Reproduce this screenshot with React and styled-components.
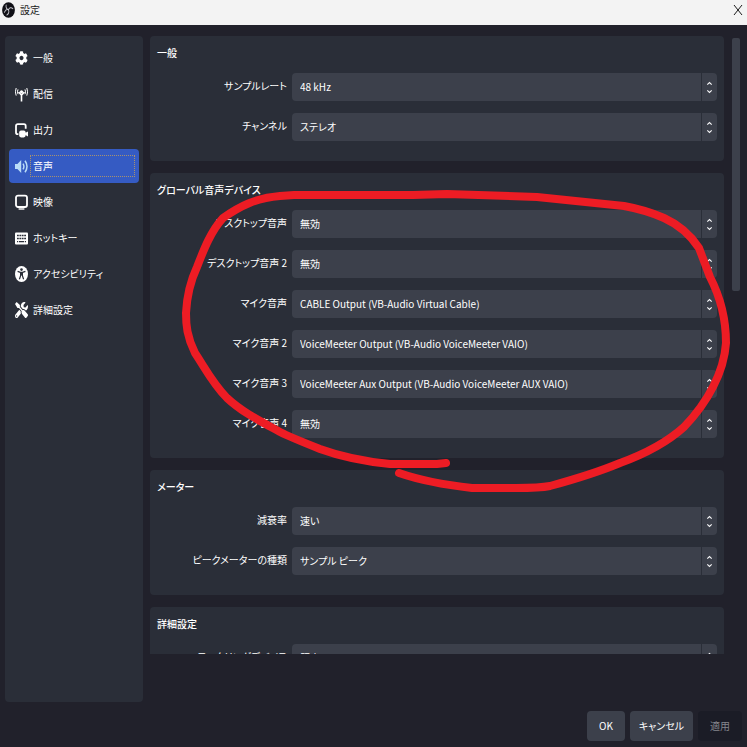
import React, { useState } from "react";
import styled, { createGlobalStyle } from "styled-components";
import { FaCog, FaTools } from "react-icons/fa";

const GlobalStyle = createGlobalStyle`
  * {
    box-sizing: border-box;
  }
  body {
    margin: 0;
    background: #21212b;
    color: #fff;
    font-family: "Noto Sans CJK JP", "Noto Sans", sans-serif;
    font-size: 10px;
    line-height: 16px;
    font-feature-settings: "palt";
  }
  button,
  select {
    font: inherit;
    font-feature-settings: inherit;
    color: inherit;
    border: 0;
    margin: 0;
  }
`;

const Window = styled.div`
  position: relative;
  display: flex;
  flex-direction: column;
  height: 100vh;
  overflow: hidden;
`;

const TitleBar = styled.header`
  display: flex;
  align-items: center;
  gap: 5px;
  flex: none;
  height: 25px;
  padding: 0 4px 6px 2px;
  background: #f3f3f3;
  color: #1b1b1b;
`;

const Title = styled.h1`
  flex: 1;
  margin: 0;
  font-size: 10px;
  font-weight: 400;
`;

const CloseButton = styled.button`
  display: flex;
  padding: 0;
  background: none;
`;

const Main = styled.div`
  display: flex;
  flex: 1;
  min-height: 0;
  gap: 7px;
  padding: 11px 7px 9px 5px;
`;

const Sidebar = styled.nav`
  display: flex;
  flex-direction: column;
  flex: none;
  gap: 2px;
  width: 138px;
  padding: 5px 4px;
  border-radius: 4px;
  background: #2a2e38;
`;

const NavButton = styled.button`
  display: flex;
  align-items: center;
  gap: 2px;
  height: 34px;
  padding: 0 4px 0 6px;
  border-radius: 4px;
  background: ${(props) => (props.$active ? "#355bc3" : "transparent")};
  text-align: left;

  svg {
    flex: none;
    color: ${(props) => (props.$active ? "#b9dcf7" : "#fff")};
  }
`;

const NavText = styled.span`
  flex: 1;
  padding: 2px;
  border: 1px dotted ${(props) => (props.$active ? "#a8926f" : "transparent")};
`;

const ScrollArea = styled.div`
  display: flex;
  flex: 1;
  gap: 8px;
  min-width: 0;
  margin-bottom: 48px;
`;

const Groups = styled.main`
  display: flex;
  flex-direction: column;
  flex: 1;
  gap: 12px;
  min-width: 0;
  overflow-y: auto;
  scrollbar-width: none;
`;

const ScrollTrack = styled.div`
  flex: none;
  width: 8px;
  padding-top: 2px;
`;

const ScrollThumb = styled.div`
  height: 41%;
  border-radius: 2px;
  background: #3c404b;
`;

const Group = styled.section`
  display: flex;
  flex-direction: column;
  flex: none;
  gap: 12px;
  padding: 9px 7px 20px;
  border-radius: 4px;
  background: #2a2e38;
`;

const GroupTitle = styled.h2`
  margin: 0;
  font-size: 10px;
  line-height: 16px;
  font-weight: 500;
`;

const Row = styled.div`
  display: grid;
  grid-template-columns: 130px 1fr;
  gap: 5px;
`;

const Label = styled.label`
  line-height: 26px;
  text-align: right;
  white-space: nowrap;
`;

const Combo = styled.div`
  display: flex;
  gap: 1px;
  height: 28px;
  border-radius: 4px;
  overflow: hidden;
`;

const Select = styled.select`
  flex: 1;
  min-width: 0;
  padding: 0 8px;
  border-radius: 0;
  background: #3c404b;
  appearance: none;
  outline: none;
`;

const Stepper = styled.span`
  display: flex;
  align-items: center;
  justify-content: center;
  width: 15px;
  padding-top: 1px;
  background: #3c404b;
`;

const Footer = styled.footer`
  display: flex;
  justify-content: flex-end;
  flex: none;
  gap: 5px;
  padding: 0 5px 6px;
`;

const DialogButton = styled.button`
  min-width: ${(props) => (props.$wide ? "63px" : "38px")};
  height: 30px;
  padding: 0 ${(props) => (props.$wide ? "8px" : "12px")};
  border-radius: 4px;
  background: #3c404b;

  &:disabled {
    background: #1b1c26;
    color: #85868d;
  }
`;

const Marker = styled.svg`
  position: absolute;
  inset: 0;
  width: 100%;
  pointer-events: none;
`;

const AntennaIcon = () => (
  <svg width="13" height="15" viewBox="0 0 13 15" fill="none" stroke="currentColor">
    <path d="M3.6 5L6.5 8L9.4 5M6.5 7.4V14.6" strokeWidth="1.6" />
    <circle cx="6.5" cy="4.8" r="1.6" fill="currentColor" stroke="none" />
    <path
      d="M3 2.4Q1.9 4.8 3 7.2M1.2 1Q-0.4 4.8 1.2 8.6M10 2.4Q11.1 4.8 10 7.2M11.8 1Q13.4 4.8 11.8 8.6"
      strokeWidth="1"
    />
  </svg>
);

const OutputIcon = () => (
  <svg width="13" height="15" viewBox="0 0 13 15" fill="none">
    <path
      d="M3.4 11.2H2.8Q1 11.2 1 9.4V2.9Q1 1.2 2.8 1.2H9Q10.7 1.2 10.7 2.9V5.8"
      stroke="currentColor"
      strokeWidth="1.8"
    />
    <rect x="4.2" y="7.4" width="6.4" height="7" rx="1.8" fill="currentColor" />
    <path d="M10 10L13 8.4V13.4L10 11.8Z" fill="currentColor" />
  </svg>
);

const SpeakerIcon = () => (
  <svg width="13" height="15" viewBox="0 0 13 15" fill="none">
    <path d="M0 5H2.4L6.2 1V14L2.4 10H0Z" fill="currentColor" />
    <path
      d="M8 4.6Q9.8 7.5 8 10.4M10 1.8Q14 7.5 10 13.2"
      stroke="currentColor"
      strokeWidth="1.5"
    />
  </svg>
);

const MonitorIcon = () => (
  <svg width="13" height="16" viewBox="0 0 13 16" fill="none">
    <rect x="1" y="1.6" width="11" height="11.4" rx="2" stroke="currentColor" strokeWidth="1.8" />
    <path d="M3.6 15H9.4" stroke="currentColor" strokeWidth="1.4" />
  </svg>
);

const KeyboardIcon = () => (
  <svg width="13" height="13" viewBox="0 0 13 13">
    <rect y="0.5" width="13" height="12" rx="1" fill="currentColor" />
    <path
      d="M2 3.6H11M2 6.4H11"
      stroke="#2a2e38"
      strokeWidth="1.5"
      strokeDasharray="1.8 0.6"
    />
    <path d="M2 9.6H3.2M4 9.6H9M9.8 9.6H11" stroke="#2a2e38" strokeWidth="1.4" />
  </svg>
);

const AccessIcon = () => (
  <svg width="13" height="16" viewBox="0 0 13 16">
    <ellipse cx="6.5" cy="8" rx="6.5" ry="8" fill="currentColor" />
    <circle cx="6.5" cy="3.6" r="1.3" fill="#2a2e38" />
    <path
      d="M2.6 5.4L5.4 6.4H7.6L10.4 5.4M5.6 6.4V9.6L4.4 13.2M7.4 6.4V9.6L8.6 13.2M6.5 6.4V9.6"
      fill="none"
      stroke="#2a2e38"
      strokeWidth="1.2"
    />
  </svg>
);

const Chevrons = () => (
  <svg width="7" height="13" viewBox="0 0 7 13" fill="none" stroke="#f4f4f6" strokeWidth="1.1">
    <path d="M1.3 3.7L3.5 1.5L5.7 3.7M1.3 9.3L3.5 11.5L5.7 9.3" />
  </svg>
);

const ObsLogo = () => (
  <svg width="13" height="16" viewBox="0 0 24 24" preserveAspectRatio="none">
    <circle cx="12" cy="12" r="11.8" fill="#101016" />
    <g fill="none" stroke="#c9c9d0" strokeWidth="1.6" strokeLinecap="round">
      <path d="M7.6 4.6C6.8 8.2 8.6 11 12 11.6" />
      <path d="M12 11.6C13.4 8.6 17 7.6 20 10" />
      <path d="M12 11.6C13.6 14.6 12.4 18 9 19.4" />
      <path d="M12 11.6C9.4 11 6 12.2 4.6 15.4" />
    </g>
  </svg>
);

const pages = [
  { name: "一般", icon: <FaCog style={{ width: 13, height: 14 }} preserveAspectRatio="none" /> },
  { name: "配信", icon: <AntennaIcon /> },
  { name: "出力", icon: <OutputIcon /> },
  { name: "音声", icon: <SpeakerIcon /> },
  { name: "映像", icon: <MonitorIcon /> },
  { name: "ホットキー", icon: <KeyboardIcon /> },
  { name: "アクセシビリティ", icon: <AccessIcon /> },
  { name: "詳細設定", icon: <FaTools style={{ width: 13, height: 16 }} preserveAspectRatio="none" /> },
];

const groups = [
  {
    title: "一般",
    rows: [
      ["サンプルレート", "48 kHz"],
      ["チャンネル", "ステレオ"],
    ],
  },
  {
    title: "グローバル音声デバイス",
    rows: [
      ["デスクトップ音声", "無効"],
      ["デスクトップ音声 2", "無効"],
      ["マイク音声", "CABLE Output (VB-Audio Virtual Cable)"],
      ["マイク音声 2", "VoiceMeeter Output (VB-Audio VoiceMeeter VAIO)"],
      ["マイク音声 3", "VoiceMeeter Aux Output (VB-Audio VoiceMeeter AUX VAIO)"],
      ["マイク音声 4", "無効"],
    ],
  },
  {
    title: "メーター",
    rows: [
      ["減衰率", "速い"],
      ["ピークメーターの種類", "サンプル ピーク"],
    ],
  },
  {
    title: "詳細設定",
    rows: [["モニタリングデバイス", "既定"]],
  },
];

function SettingRow({ id, label, value }) {
  return (
    <Row>
      <Label htmlFor={id}>{label}</Label>
      <Combo>
        <Select id={id} defaultValue={value}>
          <option>{value}</option>
        </Select>
        <Stepper>
          <Chevrons />
        </Stepper>
      </Combo>
    </Row>
  );
}

function App() {
  const [page, setPage] = useState("音声");
  return (
    <Window>
      <GlobalStyle />
      <TitleBar>
        <ObsLogo />
        <Title>設定</Title>
        <CloseButton aria-label="閉じる">
          <svg width="10" height="12" viewBox="0 0 10 12" stroke="#1b1b1b">
            <path d="M1 1L9 11M9 1L1 11" />
          </svg>
        </CloseButton>
      </TitleBar>
      <Main>
        <Sidebar>
          {pages.map(({ name, icon }) => (
            <NavButton key={name} $active={name === page} onClick={() => setPage(name)}>
              {icon}
              <NavText $active={name === page}>{name}</NavText>
            </NavButton>
          ))}
        </Sidebar>
        <ScrollArea>
          <Groups>
            {groups.map((group, g) => (
              <Group key={group.title}>
                <GroupTitle>{group.title}</GroupTitle>
                {group.rows.map(([label, value], r) => (
                  <SettingRow key={label} id={`s${g}-${r}`} label={label} value={value} />
                ))}
              </Group>
            ))}
          </Groups>
          <ScrollTrack>
            <ScrollThumb />
          </ScrollTrack>
        </ScrollArea>
      </Main>
      <Footer>
        <DialogButton>OK</DialogButton>
        <DialogButton $wide>キャンセル</DialogButton>
        <DialogButton disabled>適用</DialogButton>
      </Footer>
      <Marker
        viewBox="0 0 747 747"
        fill="none"
        stroke="#ed1c24"
        strokeWidth="8"
        strokeLinecap="round"
        strokeLinejoin="round"
      >
        <path d="M446 463L437 464H390Q350 460 320 449C300 441 290 437 280 432C260 421 242 412 227 398C213 384 205 368 195 353C187 337 186 325 186 313C187 294 190 282 197 267C204 249 211 231 223 218C240 206 256 198 280 196L294 195H413L447 194L537 197L624 206Q646 210 664 218Q686 228 699 248L710 277Q726 308 726 343C724 372 708 402 684 427C664 445 642 455 620 463C596 473 572 480 550 486Q540 488 516 488H472Q428 483 399 473" />
      </Marker>
    </Window>
  );
}

export default App;
